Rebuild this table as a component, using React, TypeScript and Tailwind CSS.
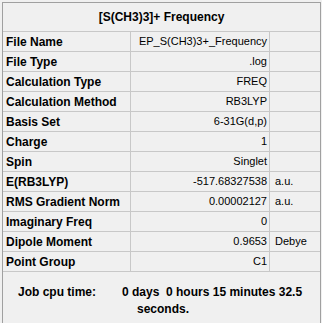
import React from "react";

type Row = { label: string; value: string; unit?: string };

const rows: Row[] = [
  { label: "File Name", value: "EP_S(CH3)3+_Frequency" },
  { label: "File Type", value: ".log" },
  { label: "Calculation Type", value: "FREQ" },
  { label: "Calculation Method", value: "RB3LYP" },
  { label: "Basis Set", value: "6-31G(d,p)" },
  { label: "Charge", value: "1" },
  { label: "Spin", value: "Singlet" },
  { label: "E(RB3LYP)", value: "-517.68327538", unit: "a.u." },
  { label: "RMS Gradient Norm", value: "0.00002127", unit: "a.u." },
  { label: "Imaginary Freq", value: "0" },
  { label: "Dipole Moment", value: "0.9653", unit: "Debye" },
  { label: "Point Group", value: "C1" },
];

export default function App() {
  return (
    <div
      className="w-[322px] h-[323px] bg-[#f0f0f0] pt-[2px] pl-[2px] pr-[1px] text-black"
      style={{ fontFamily: '"Liberation Sans", Arial, sans-serif' }}
    >
      <div className="h-full flex flex-col border-l border-t border-r border-[#a0a0a0]">
        <div className="h-[28px] flex items-center justify-center text-[12px] font-bold">
          [S(CH3)3]+ Frequency
        </div>
        {rows.map((r) => (
          <div key={r.label} className="h-[20px] flex border-t border-[#c8c8c8]">
            <div className="w-[128px] border-r border-[#c8c8c8] flex items-center pl-[3px] text-[12px] font-bold whitespace-nowrap">
              {r.label}
            </div>
            <div className="w-[139px] border-r border-[#c8c8c8] flex items-center justify-end pr-[2px] text-[11px] whitespace-nowrap">
              {r.value}
            </div>
            <div className="flex-1 flex items-center pl-[5px] text-[11px]">
              {r.unit ?? ""}
            </div>
          </div>
        ))}
        <div className="flex-1 border-t border-[#c8c8c8] pt-[12px] pl-[15px] flex text-[12px] font-bold leading-[17px]">
          <div className="w-[104px]">Job cpu time:</div>
          <div className="flex flex-col">
            <span className="whitespace-pre">0 days  0 hours 15 minutes 32.5</span>
            <span className="pl-[15px]">seconds.</span>
          </div>
        </div>
      </div>
    </div>
  );
}
